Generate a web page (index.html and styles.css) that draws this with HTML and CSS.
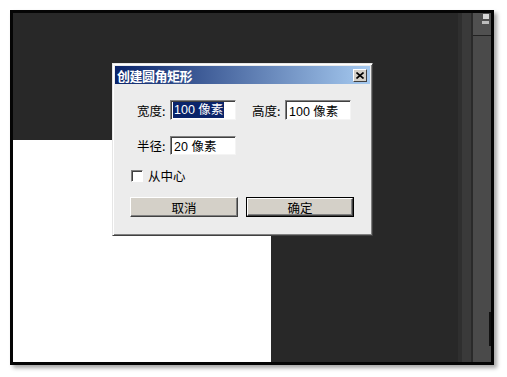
FILE: index.html
```html
<!DOCTYPE html>
<html>
<head>
<meta charset="utf-8">
<link rel="stylesheet" href="styles.css">
</head>
<body>
<div class="frame">
  <div class="work">
    <div class="work-top"></div>
    <div class="canvas"></div>
  </div>
  <div class="strip s1"></div>
  <div class="strip s2"></div>
  <div class="strip s3"></div>
  <div class="panel">
    <div class="panel-head">
      <span class="ico a"></span>
      <span class="ico b"></span>
    </div>
    <div class="panel-body"><span class="mark"></span></div>
  </div>

  <div class="dialog">
    <div class="titlebar">
      <span class="title">创建圆角矩形</span>
      <span class="close"><svg width="8" height="7" viewBox="0 0 8 7"><path d="M0.5 0.5 L7.5 6.5 M7.5 0.5 L0.5 6.5" stroke="#000" stroke-width="1.6"/></svg></span>
    </div>
    <div class="content">
      <div class="row r1">
        <span class="label">宽度:</span>
        <span class="field"><span class="sel">100 像素</span></span>
        <span class="label l2">高度:</span>
        <span class="field">100 像素</span>
      </div>
      <div class="row r2">
        <span class="label">半径:</span>
        <span class="field">20 像素</span>
      </div>
      <div class="row r3">
        <span class="check"></span>
        <span class="clabel">从中心</span>
      </div>
      <div class="row r4">
        <span class="btn">取消</span>
        <span class="btn def"><span class="btn-in">确定</span></span>
      </div>
    </div>
  </div>
</div>
</body>
</html>
```
FILE: styles.css
```css
html, body {
  margin: 0;
  padding: 0;
  background: #ffffff;
}
body {
  width: 507px;
  height: 377px;
  overflow: hidden;
  padding: 10px 0 0 10px;
  box-sizing: border-box;
  font-family: "Liberation Sans", "Noto Sans CJK SC", sans-serif;
  font-size: 12px;
}
.frame {
  position: relative;
  width: 484px;
  height: 355px;
  box-sizing: border-box;
  border: 3px solid #050505;
  background: #282828;
  display: flex;
  box-shadow: 3px 3px 4px rgba(0,0,0,0.35);
}
.work {
  width: 445px;
  display: flex;
  flex-direction: column;
  background: #282828;
}
.work-top {
  height: 127px;
}
.canvas {
  width: 258px;
  flex: 1;
  background: #ffffff;
}
.strip { height: 100%; }
.s1 { width: 4px; background: #2f2f2f; }
.s2 { width: 9px; background: #3a3a3a; }
.s3 { width: 2px; background: #2a2a2a; }
.panel {
  flex: 1;
  display: flex;
  flex-direction: column;
  background: #4a4a4a;
}
.panel-head {
  height: 22px;
  border-bottom: 1px solid #222;
  display: flex;
  flex-direction: column;
  align-items: flex-end;
  padding: 0 2px 0 0;
  gap: 2px;
  background: #505050;
}
.ico { display: block; width: 6px; background: #d8d8d8; }
.ico.a { height: 5px; margin-top: 1px; }
.ico.b { height: 3px; background: #bdbdbd; width: 7px; }
.panel-body { flex: 1; position: relative; }
.mark {
  position: absolute;
  right: 0;
  bottom: 16px;
  width: 2px;
  height: 34px;
  background: #111;
}

.dialog {
  position: absolute;
  left: 99px;
  top: 50px;
  width: 261px;
  height: 173px;
  box-sizing: border-box;
  background: #ececec;
  border: 1px solid;
  border-color: #e6e6e6 #404040 #404040 #e6e6e6;
  box-shadow: inset 1px 1px #ffffff, inset -1px -1px #808080;
  padding: 2px;
  display: flex;
  flex-direction: column;
}
.titlebar {
  height: 18px;
  background: linear-gradient(to right, #0a246a, #a6caf0);
  display: flex;
  align-items: center;
  justify-content: space-between;
  padding: 0 3px 0 2px;
}
.title {
  color: #fff;
  font-weight: bold;
  font-size: 13px;
  font-family: "Noto Sans CJK SC", sans-serif;
  letter-spacing: -0.5px;
}
.close {
  width: 14px;
  height: 13px;
  box-sizing: border-box;
  background: #d4d0c8;
  border: 1px solid;
  border-color: #fff #404040 #404040 #fff;
  display: flex;
  align-items: center;
  justify-content: center;
}
.content {
  flex: 1;
  display: flex;
  flex-direction: column;
  padding: 16px 0 0 15px;
}
.row {
  display: flex;
  align-items: center;
}
.label {
  width: 33px;
  margin-left: 7px;
  color: #000;
  font-family: "Noto Sans CJK SC", sans-serif;
  font-size: 12.5px;
}
.label.l2 { margin-left: 16px; }
.field {
  width: 66px;
  height: 20px;
  box-sizing: border-box;
  background: #fff;
  border: 1px solid;
  border-color: #808080 #f4f4f4 #f4f4f4 #808080;
  box-shadow: inset 1px 1px #404040;
  padding: 0 0 0 3px;
  display: flex;
  align-items: center;
  color: #000;
  font-size: 12.5px;
  white-space: nowrap;
}
.sel {
  background: #0a246a;
  color: #fff;
  line-height: 16px;
  padding: 0 1px;
  margin-left: -1px;
}
.r2 { margin-top: 16px; }
.r2 .field { height: 19px; }
.r3 { margin-top: 11px; }
.check {
  width: 12px;
  height: 12px;
  box-sizing: border-box;
  margin-left: 1px;
  background: #fff;
  border: 1px solid;
  border-color: #808080 #fff #fff #808080;
  box-shadow: inset 1px 1px #404040;
}
.clabel {
  margin-left: 5px;
  font-family: "Noto Sans CJK SC", sans-serif;
  font-size: 12.5px;
  color: #000;
}
.r4 { margin-top: 12px; gap: 8px; }
.btn {
  width: 108px;
  height: 20px;
  box-sizing: border-box;
  background: #d4d0c8;
  border: 1px solid;
  border-color: #fff #404040 #404040 #fff;
  box-shadow: inset -1px -1px #808080;
  display: flex;
  align-items: center;
  justify-content: center;
  font-family: "Noto Sans CJK SC", sans-serif;
  font-size: 12.5px;
  color: #000;
}
.btn.def {
  border: 1px solid #000;
  box-shadow: none;
  padding: 0;
}
.btn-in {
  width: 100%;
  height: 100%;
  box-sizing: border-box;
  border: 1px solid;
  border-color: #fff #404040 #404040 #fff;
  box-shadow: inset -1px -1px #808080;
  display: flex;
  align-items: center;
  justify-content: center;
}
```
